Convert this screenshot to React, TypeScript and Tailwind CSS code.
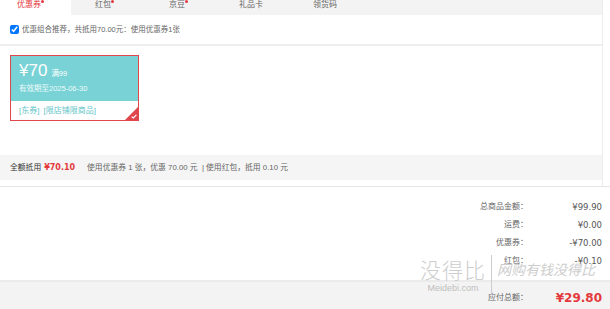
const tabs = [
  { label: '优惠券', dot: true, active: true },
  { label: '红包', dot: true },
  { label: '京豆', dot: true },
  { label: '礼品卡' },
  { label: '领货码' },
]

const totals = [
  { label: '总商品金额：', value: '¥99.90' },
  { label: '运费：', value: '¥0.00' },
  { label: '优惠券：', value: '-¥70.00' },
  { label: '红包：', value: '-¥0.10' },
]

function CouponCard() {
  return (
    <div className="relative w-[129px] h-[66px] border border-[#e0474c] bg-white flex flex-col">
      <div className="h-[45px] bg-[#79d3d6] pl-[8px] pt-[6px] text-white">
        <div className="flex items-baseline gap-[4px] leading-none">
          <span className="text-[17px] font-['Liberation_Sans',sans-serif]">¥70</span>
          <span className="text-[7.5px]">满99</span>
        </div>
        <div className="mt-[6px] text-[7.5px] leading-none text-[#eefafa]">有效期至2025-06-30</div>
      </div>
      <div className="flex-1 flex items-center gap-[4px] pl-[8px] text-[8px] text-[#62c5c8]">
        <span>[东券]</span>
        <span>[限店铺限商品]</span>
      </div>
      {/* selected corner */}
      <div className="absolute right-0 bottom-0 w-0 h-0 border-l-[13px] border-l-transparent border-b-[13px] border-b-[#e0474c]" />
      <svg className="absolute right-[1px] bottom-[1px]" width="6" height="5" viewBox="0 0 6 5">
        <path d="M0.6 2.6 L2.3 4 L5.4 0.8" stroke="white" strokeWidth="1.2" fill="none" />
      </svg>
    </div>
  )
}

export default function App() {
  return (
    <div className="relative w-[610px] h-[309px] overflow-hidden bg-white text-[#666] font-['Liberation_Sans','Noto_Sans_CJK_SC',sans-serif]">
      <div className="w-[603px] border-r border-[#ececec]">
        {/* Tabs */}
        <div className="flex gap-[3px] h-[15px] bg-[#f3f3f3]">
          {tabs.map((t) => (
            <div
              key={t.label}
              className={`w-[71px] pr-[13px] flex justify-center text-[8px] leading-[10px] ${
                t.active ? 'bg-white text-[#e4393c]' : 'text-[#666]'
              }`}
            >
              <span className="relative">
                {t.label}
                {t.dot && <span className="absolute -right-[3px] top-[0px] w-[3px] h-[3px] rounded-full bg-[#e4393c]" />}
              </span>
            </div>
          ))}
        </div>

        {/* Recommend */}
        <div className="h-[29px] flex items-center pl-[10px] gap-[3px]">
          <input type="checkbox" defaultChecked className="w-[9px] h-[9px] m-0" />
          <span className="text-[7.5px]">优惠组合推荐，共抵用70.00元：使用优惠券1张</span>
        </div>
        <div className="h-[2px] bg-[#eeeeee]" />

        {/* Coupons */}
        <div className="h-[109px] pt-[9px] pl-[10px]">
          <CouponCard />
        </div>

        {/* Summary */}
        <div className="h-[25px] bg-[#f5f5f5] flex items-center pl-[10px] text-[7.8px] whitespace-nowrap">
          <span className="text-[#333]">全额抵用</span>
          <span className="ml-[3px] text-[8px] font-bold text-[#e4393c] font-['DejaVu_Sans','Noto_Sans_CJK_SC',sans-serif]">¥70.10</span>
          <span className="ml-[12px]">使用优惠券 1 张，优惠 70.00 元 &nbsp;| 使用红包，抵用 0.10 元</span>
        </div>
        <div className="h-[6px]" />
      </div>
      <div className="h-px bg-[#e6e6e6]" />

      {/* Totals */}
      <div className="pt-[11px] pb-[10px]">
        {totals.map((r) => (
          <div key={r.label} className="h-[18px] flex items-center text-[8px]">
            <span className="flex-1 text-right pr-[2px]">{r.label}</span>
            <span className="w-[80px] pr-[8px] text-right text-[8.5px] text-[#555] font-['DejaVu_Sans','Noto_Sans_CJK_SC',sans-serif]">{r.value}</span>
          </div>
        ))}
      </div>

      <div className="h-[29px] border-t-2 border-[#ebebeb] bg-[#f3f3f3] flex items-center pt-[4px] text-[8px]">
        <span className="flex-1 text-right pr-[2px]">应付总额：</span>
        <span className="w-[80px] pr-[8px] text-right text-[12px] font-bold text-[#e4393c] font-['DejaVu_Sans',sans-serif]">¥29.80</span>
      </div>

      {/* watermark */}
      <div className="absolute left-[420px] top-[255px] flex items-center gap-[5px] text-[#cdcdcd] whitespace-nowrap pointer-events-none">
        <div className="flex flex-col items-center">
          <span className="text-[21px] leading-[25px] font-light tracking-[1px] font-['Noto_Sans_CJK_SC',sans-serif]">没得比</span>
          <span className="text-[9px] leading-[12px] text-[#bdbdbd]">Meidebi.com</span>
        </div>
        <div className="w-px h-[40px] bg-[#cdcdcd]" />
        <span className="text-[14px] italic mb-[12px] font-['Noto_Sans_CJK_SC',sans-serif]">网购有钱没得比</span>
      </div>
    </div>
  )
}
